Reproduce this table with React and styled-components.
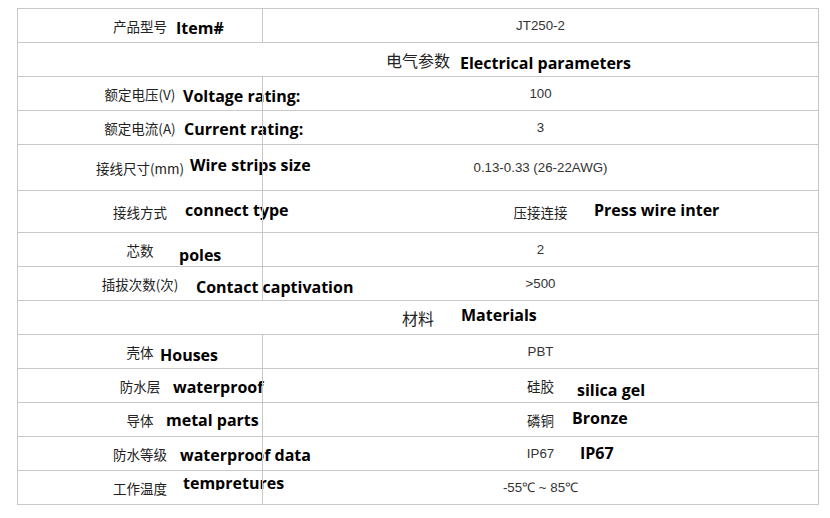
import React from 'react';
import styled, { createGlobalStyle, css } from 'styled-components';

const Global = createGlobalStyle`
  html, body { margin: 0; padding: 0; background: #fff; }
  body { font-family: "Liberation Sans", Arial, sans-serif; }
`;

const Page = styled.div`
  padding: 8px 0 0 17px;
`;

const Table = styled.div`
  width: 802px;
  box-sizing: border-box;
  border: 1px solid #c8c8c8;
  display: flex;
  flex-direction: column;
`;

const Row = styled.div`
  display: grid;
  grid-template-columns: ${(p) => (p.$span ? 'minmax(0, 1fr)' : '244px minmax(0, 1fr)')};
  height: ${(p) => p.$h}px;
  border-top: 1px solid #c8c8c8;
  &:first-child { border-top: none; }
`;

const Cell = styled.div`
  display: grid;
  grid-template-columns: minmax(0, 1fr);
  grid-template-rows: minmax(0, 1fr);
  grid-template-areas: "stack";
  min-width: 0;
  & + & {
    border-left: 1px solid #c8c8c8;
    position: relative;
  }
`;

const Zh = styled.span`
  grid-area: stack;
  justify-self: center;
  align-self: center;
  font-family: "Noto Sans CJK SC", sans-serif;
  font-size: ${(p) => (p.$big ? 16 : 13.5)}px;
  line-height: 20px;
  color: #222;
  white-space: nowrap;
`;

const Value = styled.span`
  grid-area: stack;
  justify-self: center;
  align-self: center;
  font-family: "Liberation Sans", Arial, sans-serif;
  font-size: 13.3px;
  line-height: 18px;
  color: #333;
  white-space: nowrap;
`;

const En = styled.span`
  grid-area: stack;
  justify-self: start;
  align-self: start;
  margin-left: ${(p) => p.$x}px;
  margin-top: ${(p) => p.$base - 17}px;
  font-family: "Open Sans", sans-serif;
  font-weight: 700;
  font-size: 16px;
  line-height: 20px;
  color: #000;
  white-space: nowrap;
  ${(p) =>
    p.$clip &&
    css`
      height: 17px;
      overflow: hidden;
    `}
`;

const rows = [
  { h: 33, left: { zh: '产品型号', en: 'Item#', x: 158, base: 26 }, right: { val: 'JT250-2' } },
  { h: 33, span: { zh: '电气参数', en: 'Electrical parameters', x: 442, base: 27, big: true } },
  { h: 33, left: { zh: '额定电压(V)', en: 'Voltage rating:', x: 165, base: 26 }, right: { val: '100' } },
  { h: 33, left: { zh: '额定电流(A)', en: 'Current rating:', x: 166, base: 25 }, right: { val: '3' } },
  { h: 45, left: { zh: '接线尺寸(mm)', en: 'Wire strips size', x: 172, base: 27 }, right: { val: '0.13-0.33 (26-22AWG)' } },
  { h: 41, left: { zh: '接线方式', en: 'connect type', x: 167, base: 26 }, right: { zh: '压接连接', en: 'Press wire inter', x: 331, base: 26 } },
  { h: 33, left: { zh: '芯数', en: 'poles', x: 161, base: 29 }, right: { val: '2' } },
  { h: 33, left: { zh: '插拔次数(次)', en: 'Contact captivation', x: 178, base: 27 }, right: { val: '>500' } },
  { h: 33, span: { zh: '材料', en: 'Materials', x: 443, base: 21, big: true } },
  { h: 33, left: { zh: '壳体', en: 'Houses', x: 142, base: 27 }, right: { val: 'PBT' } },
  { h: 33, left: { zh: '防水层', en: 'waterproof', x: 155, base: 25 }, right: { zh: '硅胶', en: 'silica gel', x: 314, base: 28 } },
  { h: 33, left: { zh: '导体', en: 'metal parts', x: 148, base: 24 }, right: { zh: '磷铜', en: 'Bronze', x: 309, base: 22 } },
  { h: 33, left: { zh: '防水等级', en: 'waterproof data', x: 162, base: 25 }, right: { val: 'IP67', en: 'IP67', x: 317, base: 23 } },
  { h: 33, left: { zh: '工作温度', en: 'tempretures', x: 165, base: 19, clip: true }, right: { val: '-55℃ ~ 85℃' } },
];

function CellContent({ c }) {
  return (
    <Cell>
      {c.zh && <Zh $big={c.big}>{c.zh}</Zh>}
      {c.val && <Value>{c.val}</Value>}
      {c.en && (
        <En $x={c.x} $base={c.base} $clip={c.clip}>
          {c.en}
        </En>
      )}
    </Cell>
  );
}

export default function App() {
  return (
    <>
      <Global />
      <Page>
        <Table>
          {rows.map((r, i) =>
            r.span ? (
              <Row key={i} $h={r.h} $span>
                <CellContent c={r.span} />
              </Row>
            ) : (
              <Row key={i} $h={r.h}>
                <CellContent c={r.left} />
                <CellContent c={r.right} />
              </Row>
            )
          )}
        </Table>
      </Page>
    </>
  );
}
